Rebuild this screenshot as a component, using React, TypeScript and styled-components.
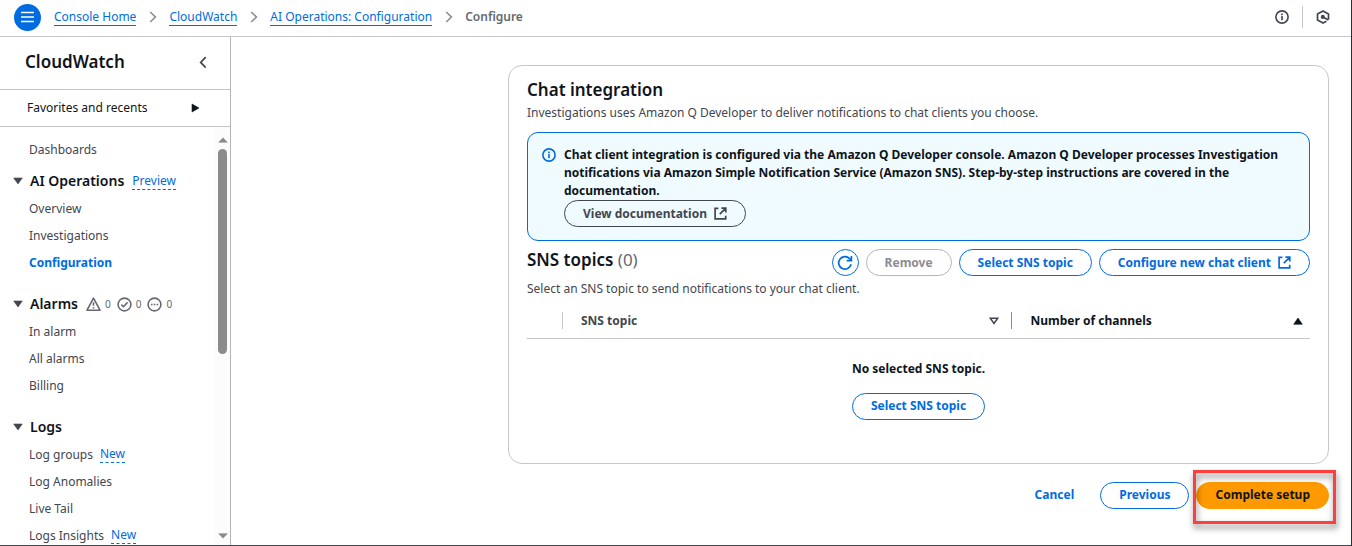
import React from 'react';
import styled, { createGlobalStyle, css } from 'styled-components';

const blue = '#006ce0';
const ink = '#0f141a';
const body = '#424650';
const line = '#c6c6cd';

const GlobalStyle = createGlobalStyle`
  *, *::before, *::after { box-sizing: border-box; }
  body {
    margin: 0;
    background: #fff;
    color: ${body};
    font: 400 12px/18px "Noto Sans", "Open Sans", sans-serif;
  }
  h1, h2, p, ul, ol { margin: 0; padding: 0; }
  ul, ol { list-style: none; }
  button { font: inherit; cursor: pointer; }
  svg { display: block; flex: none; }
`;

const Shell = styled.div`
  display: flex;
  flex-direction: column;
  height: 100vh;
  border-right: 1px solid #2b2d33;
  border-bottom: 1px solid #424650;
`;

const TopBar = styled.header`
  display: flex;
  align-items: center;
  justify-content: space-between;
  flex: none;
  height: 37px;
  padding: 0 21px 2px 14px;
  border-bottom: 1px solid ${line};
`;

const TopGroup = styled.div`
  display: flex;
  align-items: center;
  gap: 13px;
`;

const MenuButton = styled.button`
  display: grid;
  place-items: center;
  width: 27px;
  height: 27px;
  padding: 0;
  border: 0;
  border-radius: 50%;
  background: ${blue};
  color: #fff;
`;

const IconButton = styled.button`
  display: grid;
  place-items: center;
  padding: 0;
  border: 0;
  background: none;
  color: ${body};
`;

const TopDivider = styled.span`
  width: 1px;
  height: 22px;
  background: ${line};
`;

const Crumbs = styled.ol`
  display: flex;
  align-items: center;
  line-height: 16px;
  li { display: flex; align-items: center; }
  svg { margin: 0 12px 0 13px; color: #8c8c94; }
`;

const CrumbLink = styled.a`
  color: ${blue};
  text-decoration: none;
  border-bottom: 1px solid ${blue};
`;

const CurrentCrumb = styled.span`
  color: #656871;
  font-weight: 600;
`;

const Body = styled.div`
  display: flex;
  flex: 1;
  min-height: 0;
`;

const Sidebar = styled.aside`
  display: flex;
  flex-direction: column;
  flex: none;
  width: 231px;
  border-right: 1px solid #b4b4bb;
`;

const SideHeader = styled.div`
  display: flex;
  align-items: center;
  justify-content: space-between;
  height: 53px;
  padding: 0 22px 2px 25px;
  border-bottom: 1px solid ${line};
`;

const Title = styled.h2`
  color: ${ink};
  font-size: 17px;
  line-height: 22px;
  font-weight: 600;
`;

const Favorites = styled.button`
  display: flex;
  align-items: center;
  justify-content: space-between;
  flex: none;
  height: 37px;
  padding: 0 30px 0 27px;
  border: 0;
  border-bottom: 1px solid ${line};
  background: none;
  color: ${ink};
`;

const SideScroll = styled.div`
  display: flex;
  flex: 1;
  min-height: 0;
`;

const Nav = styled.nav`
  flex: 1;
  min-width: 0;
  overflow: hidden;
  padding: 9px 0 0 13px;
  > ul { margin-bottom: 4px; }
`;

const NavItem = styled.li`
  display: flex;
  align-items: center;
  gap: 7px;
  height: 27px;
  padding-left: 16px;
`;

const NavLink = styled.a<{ $active?: boolean }>`
  color: ${(p) => (p.$active ? blue : body)};
  font-weight: ${(p) => (p.$active ? 700 : 400)};
  text-decoration: none;
`;

const Badge = styled.a`
  color: ${blue};
  line-height: 16px;
  text-decoration: none;
  border-bottom: 1px dashed ${blue};
`;

const Group = styled.section`
  padding-bottom: 14px;
`;

const GroupHead = styled.div`
  display: flex;
  align-items: center;
  gap: 8px;
  height: 28px;
`;

const GroupToggle = styled.button`
  display: flex;
  align-items: center;
  gap: 7px;
  padding: 0;
  border: 0;
  background: none;
  color: ${ink};
  font-size: 14px;
  font-weight: 600;
  svg { color: ${body}; }
`;

const AlarmCounts = styled.div`
  display: flex;
  gap: 6px;
`;

const AlarmCount = styled.span`
  display: flex;
  align-items: center;
  gap: 4px;
  color: #656871;
  font-size: 10px;
`;

const ScrollTrack = styled.div`
  display: flex;
  flex-direction: column;
  align-items: center;
  width: 15px;
  padding: 10px 0 6px;
  background: #fcfcfc;
  color: #8b8b8b;
`;

const ScrollThumb = styled.div`
  flex: 0 0 51%;
  width: 9px;
  margin: 6px 0 auto;
  border-radius: 5px;
  background: #8b8b8b;
`;

const Main = styled.main`
  flex: 1;
  min-width: 0;
  padding: 28px 22px 0 277px;
`;

const Card = styled.section`
  padding: 13px 18px 43px;
  border: 1px solid ${line};
  border-radius: 14px;
`;

const Description = styled.p`
  margin-top: 3px;
`;

const Count = styled.span`
  color: #656871;
  font-weight: 400;
`;

const Alert = styled.div`
  display: flex;
  gap: 8px;
  margin: 10px 0 8px;
  padding: 13px 14px;
  border: 1px solid ${blue};
  border-radius: 11px;
  background: #f0fbff;
  color: ${blue};
  > svg { margin-top: 2px; }
`;

const AlertText = styled.p`
  color: ${ink};
  font-weight: 700;
`;

const tones = {
  normal: css`border-color: ${blue}; background: #fff; color: ${blue};`,
  neutral: css`border-color: ${body}; background: transparent; color: ${body};`,
  disabled: css`border-color: #b4b4bb; background: #fff; color: #8c8c94;`,
  primary: css`border-color: #ff9900; background: #ff9900; color: ${ink};`,
  link: css`border-color: transparent; background: none; color: ${blue};`,
};

const Button = styled.button<{ $tone?: keyof typeof tones; $round?: boolean }>`
  display: inline-flex;
  align-items: center;
  justify-content: center;
  gap: 7px;
  height: 27px;
  width: ${(p) => (p.$round ? '27px' : 'auto')};
  padding: ${(p) => (p.$round ? '0' : '0 18px')};
  border: 1px solid;
  border-radius: 14px;
  font-weight: 700;
  white-space: nowrap;
  ${(p) => tones[p.$tone ?? 'normal']}
`;

const SectionHead = styled.div`
  display: flex;
  align-items: flex-start;
  justify-content: space-between;
  height: 27px;
`;

const Actions = styled.div`
  display: flex;
  gap: 7px;
`;

const Hint = styled.p`
  padding-top: 4px;
`;

const Table = styled.table`
  width: 100%;
  margin-top: 6px;
  border-collapse: collapse;
  table-layout: fixed;
`;

const HeadCell = styled.th<{ $width?: string; $sorted?: boolean }>`
  width: ${(p) => p.$width ?? 'auto'};
  height: 34px;
  padding: 0;
  border-bottom: 1px solid ${line};
  color: ${(p) => (p.$sorted ? ink : body)};
  text-align: left;
`;

const HeadContent = styled.div<{ $divider?: string; $end?: string }>`
  display: flex;
  align-items: center;
  justify-content: space-between;
  height: 17px;
  padding: 0 ${(p) => p.$end ?? '0'} 0 18px;
  border-right: 1px solid ${(p) => p.$divider ?? 'transparent'};
`;

const EmptyCell = styled.td`
  padding: 21px 0 0;
  color: ${ink};
  font-weight: 700;
  text-align: center;
  p { margin-bottom: 15px; }
`;

const Footer = styled.div`
  display: flex;
  justify-content: flex-end;
  gap: 7px;
  margin-top: 18px;
`;

const Highlighted = styled.div`
  position: relative;
  display: flex;
  &::after {
    content: '';
    position: absolute;
    inset: -12px -7px -15px -3px;
    border: 3px solid #fc4040;
    filter: drop-shadow(1px 4px 3px rgba(0, 0, 0, 0.5));
    pointer-events: none;
  }
`;

const ChevronRight = () => (
  <svg width="8" height="12" viewBox="0 0 8 12" fill="none" stroke="currentColor" strokeWidth="1.6">
    <path d="M1.2 1 6.4 6 1.2 11" />
  </svg>
);

const ChevronLeft = () => (
  <svg width="10" height="12" viewBox="0 0 10 12" fill="none" stroke={body} strokeWidth="1.7">
    <path d="M7.7 1.2 2.7 6.4l5 5.2" />
  </svg>
);

const Triangle = ({ d, w, h }: { d: string; w: number; h: number }) => (
  <svg width={w} height={h} viewBox={`0 0 ${w} ${h}`} fill="currentColor" stroke="currentColor" strokeWidth=".6" strokeLinejoin="round">
    <path d={d} />
  </svg>
);

const InfoIcon = () => (
  <svg width="14" height="14" viewBox="0 0 14 14" fill="none" stroke="currentColor" strokeWidth="1.6">
    <circle cx="7" cy="7" r="6.1" />
    <path d="M7 6.1v4.2M7 3.6v1.6" />
  </svg>
);

const HexIcon = () => (
  <svg width="14" height="14" viewBox="0 0 14 14" fill="none" stroke="currentColor" strokeWidth="1.7" strokeLinejoin="round">
    <path d="M12.5 9.4V4L7 .9 1.5 4v6L7 13.1l3.4-1.9" />
    <path d="M7 7l5.4 2.9" />
    <circle cx="6.8" cy="6.9" r="1.2" fill="currentColor" />
  </svg>
);

const ExternalIcon = () => (
  <svg width="13" height="13" viewBox="0 0 13 13" fill="none" stroke="currentColor" strokeWidth="1.7">
    <path d="M4.4 1.3H1.1v10.6h10.6V8.8M7.4 1.1h4.4v4.4M11.6 1.4 5.8 7.2" />
  </svg>
);

const RefreshIcon = () => (
  <svg width="16" height="16" viewBox="0 0 16 16" fill="none" stroke="currentColor" strokeWidth="1.7">
    <path d="M14.1 9.3A6.3 6.3 0 1 1 12.6 3.6L14.2 5.2" />
    <path d="M14.4 .9v4.8H9.6" />
  </svg>
);

const AlarmIcon = ({ kind }: { kind: 'alarm' | 'ok' | 'pending' }) => (
  <svg width="15" height="15" viewBox="0 0 15 15" fill="none" stroke="currentColor" strokeWidth="1.6" strokeLinejoin="round">
    {kind === 'alarm' ? (
      <path d="M7.5 1.2 14 13.2H1ZM7.5 5.3v3.5M7.5 9.9v1.5" />
    ) : (
      <circle cx="7.5" cy="7.5" r="6.4" />
    )}
    {kind === 'ok' && <path d="M4.3 7.6 6.5 9.8 10.6 5.2" />}
    {kind === 'pending' && <path d="M3.9 7.5h1.6M6.7 7.5h1.6M9.5 7.5h1.6" />}
  </svg>
);

type Item = { label: string; active?: boolean; isNew?: boolean };

const NavList = ({ items }: { items: Item[] }) => (
  <ul>
    {items.map((item) => (
      <NavItem key={item.label}>
        <NavLink href="#" $active={item.active}>{item.label}</NavLink>
        {item.isNew && <Badge href="#">New</Badge>}
      </NavItem>
    ))}
  </ul>
);

const NavGroup = ({ title, extra, items }: { title: string; extra?: React.ReactNode; items: Item[] }) => (
  <Group>
    <GroupHead>
      <GroupToggle aria-expanded="true">
        <Triangle w={10} h={8} d="M.7 1h8.6L5 7Z" />
        {title}
      </GroupToggle>
      {extra}
    </GroupHead>
    <NavList items={items} />
  </Group>
);

export default function App() {
  return (
    <Shell>
      <GlobalStyle />
      <TopBar>
        <TopGroup>
          <MenuButton aria-label="Open menu">
            <svg width="13" height="12" viewBox="0 0 13 12" stroke="currentColor" strokeWidth="1.4">
              <path d="M0 1.5h13M0 6h13M0 10.5h13" />
            </svg>
          </MenuButton>
          <Crumbs>
            <li><CrumbLink href="#">Console Home</CrumbLink><ChevronRight /></li>
            <li><CrumbLink href="#">CloudWatch</CrumbLink><ChevronRight /></li>
            <li><CrumbLink href="#">AI Operations: Configuration</CrumbLink><ChevronRight /></li>
            <li><CurrentCrumb aria-current="page">Configure</CurrentCrumb></li>
          </Crumbs>
        </TopGroup>
        <TopGroup>
          <IconButton aria-label="Info"><InfoIcon /></IconButton>
          <TopDivider />
          <IconButton aria-label="Amazon Q"><HexIcon /></IconButton>
        </TopGroup>
      </TopBar>

      <Body>
        <Sidebar>
          <SideHeader>
            <Title>CloudWatch</Title>
            <IconButton aria-label="Close navigation"><ChevronLeft /></IconButton>
          </SideHeader>
          <Favorites>
            Favorites and recents
            <Triangle w={9} h={10} d="M1 1v8l7-4Z" />
          </Favorites>
          <SideScroll>
            <Nav>
              <NavList items={[{ label: 'Dashboards' }]} />
              <NavGroup
                title="AI Operations"
                extra={<Badge href="#">Preview</Badge>}
                items={[{ label: 'Overview' }, { label: 'Investigations' }, { label: 'Configuration', active: true }]}
              />
              <NavGroup
                title="Alarms"
                extra={
                  <AlarmCounts>
                    <AlarmCount><AlarmIcon kind="alarm" />0</AlarmCount>
                    <AlarmCount><AlarmIcon kind="ok" />0</AlarmCount>
                    <AlarmCount><AlarmIcon kind="pending" />0</AlarmCount>
                  </AlarmCounts>
                }
                items={[{ label: 'In alarm' }, { label: 'All alarms' }, { label: 'Billing' }]}
              />
              <NavGroup
                title="Logs"
                items={[
                  { label: 'Log groups', isNew: true },
                  { label: 'Log Anomalies' },
                  { label: 'Live Tail' },
                  { label: 'Logs Insights', isNew: true },
                ]}
              />
            </Nav>
            <ScrollTrack aria-hidden="true">
              <Triangle w={10} h={6} d="M.7 5.3h8.6L5 .8Z" />
              <ScrollThumb />
              <Triangle w={10} h={6} d="M.7.7h8.6L5 5.2Z" />
            </ScrollTrack>
          </SideScroll>
        </Sidebar>

        <Main>
          <Card>
            <Title>Chat integration</Title>
            <Description>
              Investigations uses Amazon Q Developer to deliver notifications to chat clients you choose.
            </Description>
            <Alert>
              <InfoIcon />
              <div>
                <AlertText>
                  Chat client integration is configured via the Amazon Q Developer console. Amazon Q Developer processes
                  Investigation notifications via Amazon Simple Notification Service (Amazon SNS). Step-by-step
                  instructions are covered in the documentation.
                </AlertText>
                <Button $tone="neutral">View documentation <ExternalIcon /></Button>
              </div>
            </Alert>
            <SectionHead>
              <Title>SNS topics <Count>(0)</Count></Title>
              <Actions>
                <Button $round aria-label="Refresh"><RefreshIcon /></Button>
                <Button $tone="disabled" disabled>Remove</Button>
                <Button>Select SNS topic</Button>
                <Button>Configure new chat client <ExternalIcon /></Button>
              </Actions>
            </SectionHead>
            <Hint>Select an SNS topic to send notifications to your chat client.</Hint>
            <Table>
              <thead>
                <tr>
                  <HeadCell $width="36px"><HeadContent $divider={line} /></HeadCell>
                  <HeadCell>
                    <HeadContent $divider="#8c8c94" $end="12px">
                      SNS topic
                      <svg width="10" height="8" viewBox="0 0 10 8" fill="none" stroke="currentColor" strokeWidth="1.5">
                        <path d="M1.3 1.2h7.4L5 6.5Z" />
                      </svg>
                    </HeadContent>
                  </HeadCell>
                  <HeadCell $width="38%" $sorted aria-sort="ascending">
                    <HeadContent $end="6px">
                      Number of channels
                      <Triangle w={10} h={8} d="M.7 7.3h8.6L5 1Z" />
                    </HeadContent>
                  </HeadCell>
                </tr>
              </thead>
              <tbody>
                <tr>
                  <EmptyCell colSpan={3}>
                    <p>No selected SNS topic.</p>
                    <Button>Select SNS topic</Button>
                  </EmptyCell>
                </tr>
              </tbody>
            </Table>
          </Card>
          <Footer>
            <Button $tone="link">Cancel</Button>
            <Button>Previous</Button>
            <Highlighted><Button $tone="primary">Complete setup</Button></Highlighted>
          </Footer>
        </Main>
      </Body>
    </Shell>
  );
}
